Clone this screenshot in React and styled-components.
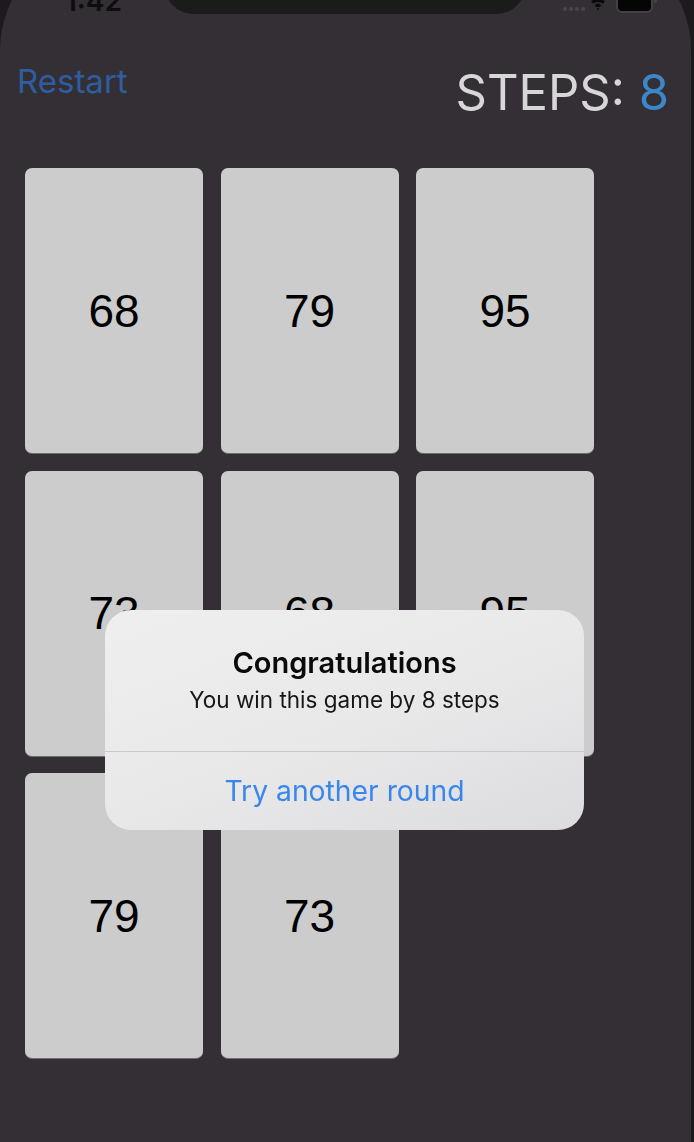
import React from "react";
import styled, { createGlobalStyle } from "styled-components";

const GlobalStyle = createGlobalStyle`
  html, body {
    margin: 0;
    padding: 0;
    background: #1d1a1d;
    overflow: hidden;
  }
  body {
    width: 694px;
    height: 1142px;
  }
`;

const Screen = styled.div`
  width: 691px;
  height: 1202px;
  margin-top: -60px;
  background: #342f35;
  border-radius: 110px 110px 0 0;
  overflow: hidden;
  font-family: Inter, "Noto Sans", sans-serif;
`;

const StatusBar = styled.div`
  display: flex;
  align-items: flex-end;
  height: 80px;
`;

const Clock = styled.div`
  width: 165px;
  box-sizing: border-box;
  padding: 0 0 5px 65px;
  font-size: 28px;
  font-weight: 600;
  line-height: 1;
  color: #0d0d0d;
`;

const Notch = styled.div`
  align-self: flex-start;
  width: 360px;
  height: 74px;
  background: #1b1b1b;
  border-radius: 0 0 28px 28px;
`;

const Indicators = styled.div`
  display: flex;
  align-items: flex-end;
  margin-left: 38px;
  padding-bottom: 8px;
`;

const Dots = styled.div`
  display: flex;
  gap: 2px;
  margin-bottom: 1px;
`;

const Dot = styled.span`
  width: 4px;
  height: 4px;
  border-radius: 50%;
  background: #4a464b;
`;

const Battery = styled.div`
  display: flex;
  align-items: flex-start;
  margin-left: 11px;
  margin-bottom: -1px;
`;

const BatteryBody = styled.div`
  width: 37px;
  height: 24px;
  box-sizing: border-box;
  background: #050505;
  border: 2px solid #444045;
  border-radius: 6px;
`;

const BatteryCap = styled.div`
  width: 3px;
  height: 14px;
  margin-left: 1px;
  background: #444045;
  border-radius: 0 2px 2px 0;
`;

const Header = styled.div`
  display: flex;
  justify-content: space-between;
  align-items: flex-start;
  height: 100px;
  padding: 0 22px 0 17px;
`;

const Restart = styled.button`
  margin-top: 45px;
  padding: 0;
  border: none;
  background: none;
  font-family: inherit;
  font-size: 33px;
  line-height: 1;
  color: #2e5e9f;
`;

const Steps = styled.div`
  margin-top: 48px;
  font-size: 49px;
  line-height: 1;
  color: #d7d7d7;
`;

const StepCount = styled.span`
  color: #3c87c9;
`;

const Board = styled.div`
  display: grid;
  grid-template-columns: repeat(3, 178px);
  grid-auto-rows: 285px;
  column-gap: 17.5px;
  row-gap: 17.5px;
  margin: 48px 0 0 25px;
`;

const Card = styled.div`
  display: flex;
  align-items: center;
  justify-content: center;
  background: #cccccc;
  border-radius: 7px;
  box-shadow: 0 1px 0 rgba(150, 150, 150, 0.6);
  font-family: "Liberation Sans", Arial, sans-serif;
  font-size: 46px;
  color: #000;
`;

const Alert = styled.div`
  position: fixed;
  top: 610px;
  left: 105px;
  width: 479px;
  border-radius: 26px;
  overflow: hidden;
  background: linear-gradient(160deg, #efefef 0%, #e8e8e9 55%, #dcdbde 100%);
  font-family: Inter, "Noto Sans", sans-serif;
  text-align: center;
`;

const AlertBody = styled.div`
  display: flex;
  flex-direction: column;
  align-items: center;
  gap: 6px;
  height: 142px;
  box-sizing: border-box;
  padding-top: 36px;
  border-bottom: 1px solid #c9c8cb;
`;

const AlertTitle = styled.div`
  font-size: 29px;
  line-height: 34px;
  font-weight: 600;
  color: #0a0a0a;
`;

const AlertMessage = styled.div`
  font-size: 22.5px;
  line-height: 28px;
  color: #161616;
`;

const AlertAction = styled.button`
  display: block;
  width: 100%;
  height: 78px;
  padding: 0;
  border: none;
  background: none;
  font-family: inherit;
  font-size: 28.3px;
  color: #3a87ec;
`;

const Wifi = () => (
  <svg width="14" height="12" viewBox="0 0 14 12" style={{ marginLeft: 6 }}>
    <path d="M0 1.5 A10 10 0 0 1 14 1.5 L11.8 3.8 A7 7 0 0 0 2.2 3.8 Z" fill="#0a0a0a" />
    <path d="M3.6 5.2 A5 5 0 0 1 10.4 5.2 L8.3 7.3 A2.2 2.2 0 0 0 5.7 7.3 Z" fill="#0a0a0a" />
    <path d="M5.9 8.6 A1.6 1.6 0 0 1 8.1 8.6 L7 11 Z" fill="#0a0a0a" />
  </svg>
);

const cards = [68, 79, 95, 73, 68, 95, 79, 73];

export default function App() {
  return (
    <>
      <GlobalStyle />
      <Screen>
        <StatusBar>
          <Clock>1:42</Clock>
          <Notch />
          <Indicators>
            <Dots>
              <Dot />
              <Dot />
              <Dot />
              <Dot />
            </Dots>
            <Wifi />
            <Battery>
              <BatteryBody />
              <BatteryCap />
            </Battery>
          </Indicators>
        </StatusBar>
        <Header>
          <Restart>Restart</Restart>
          <Steps>
            STEPS: <StepCount>8</StepCount>
          </Steps>
        </Header>
        <Board>
          {cards.map((n, i) => (
            <Card key={i}>{n}</Card>
          ))}
        </Board>
      </Screen>
      <Alert>
        <AlertBody>
          <AlertTitle>Congratulations</AlertTitle>
          <AlertMessage>You win this game by 8 steps</AlertMessage>
        </AlertBody>
        <AlertAction>Try another round</AlertAction>
      </Alert>
    </>
  );
}
